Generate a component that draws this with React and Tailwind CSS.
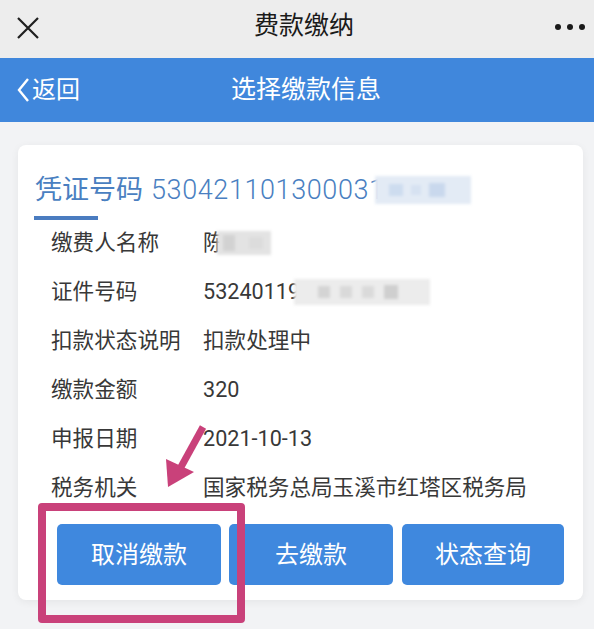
import React from 'react';

const rows = [
  { label: '缴费人名称', value: '陈', blur: 'name' },
  { label: '证件号码', value: '53240119', blur: 'id' },
  { label: '扣款状态说明', value: '扣款处理中' },
  { label: '缴款金额', value: '320' },
  { label: '申报日期', value: '2021-10-13' },
  { label: '税务机关', value: '国家税务总局玉溪市红塔区税务局' },
];

function Blur({ kind }) {
  if (kind === 'name') {
    return (
      <span className="inline-flex items-center -ml-[8px] w-[54px] h-[24px] bg-[#e3e3e3] blur-[1.5px] align-middle">
        <span className="w-[12px] h-[16px] bg-[#d2d2d2] ml-[6px]" />
        <span className="w-[14px] h-[12px] bg-[#dcdcdc] ml-[14px]" />
      </span>
    );
  }
  return (
    <span className="inline-flex items-center -ml-[6px] w-[136px] h-[26px] bg-[#ececec] blur-[1.5px] align-middle gap-[10px] pl-[24px]">
      <span className="w-[12px] h-[12px] bg-[#d4d4d4]" />
      <span className="w-[12px] h-[12px] bg-[#d9d9d9]" />
      <span className="w-[12px] h-[12px] bg-[#dadada]" />
      <span className="w-[14px] h-[14px] bg-[#cfcfcf]" />
    </span>
  );
}

export default function App() {
  return (
    <div className="relative w-[594px] h-[629px] overflow-hidden bg-[#f2f3f5] font-['Roboto','Noto_Sans_CJK_SC',sans-serif]">
      {/* wechat top bar */}
      <div className="h-[58px] bg-[#ededed] flex items-center justify-between px-[17px]">
        <svg width="22" height="22" viewBox="0 0 22 22" className="mt-[-2px]">
          <path d="M1 1 L21 21 M21 1 L1 21" stroke="#1f1f1f" strokeWidth="2.2" fill="none" />
        </svg>
        <div className="text-[25px] text-[#1a1a1a] ml-[14px] mt-[-6px]">费款缴纳</div>
        <div className="flex gap-[6px] mr-[-8px] mt-[-4px]">
          <span className="w-[6px] h-[6px] rounded-full bg-[#1a1a1a]" />
          <span className="w-[6px] h-[6px] rounded-full bg-[#1a1a1a]" />
          <span className="w-[6px] h-[6px] rounded-full bg-[#1a1a1a]" />
        </div>
      </div>

      {/* blue nav */}
      <div className="h-[64px] bg-[#4087dc] flex items-center relative">
        <div className="flex items-center pl-[17px] text-white text-[24px]">
          <svg width="12" height="24" viewBox="0 0 12 24" className="mr-[3px]">
            <path d="M11 1 L2 12 L11 23" stroke="#fff" strokeWidth="2.4" fill="none" />
          </svg>
          返回
        </div>
        <div className="absolute left-[231px] text-white text-[25px]">选择缴款信息</div>
      </div>

      {/* card */}
      <div className="pt-[23px] pl-[18px] pr-[11px]">
        <div className="bg-white rounded-[8px] shadow-[0_2px_8px_rgba(0,0,0,0.06)] h-[455px] pt-[27px]">
          <div className="pl-[17px] h-[36px] flex items-center text-[27px] text-[#4a7fc1] whitespace-nowrap">
            <span>凭证号码</span>
            <span className="ml-[8px] tracking-[0.6px] font-light">530421101300031</span>
            <span className="inline-flex items-center -ml-[10px] w-[96px] h-[28px] bg-[#e3ebf5] blur-[1.5px] gap-[8px] pl-[14px]">
              <span className="w-[14px] h-[12px] bg-[#cddcef]" />
              <span className="w-[10px] h-[10px] bg-[#d6e2f1]" />
              <span className="w-[16px] h-[14px] bg-[#c9d8ed]" />
            </span>
          </div>
          <div className="ml-[16px] mt-[8px] w-[64px] h-[4px] bg-[#4a7cc0]" />

          <div className="mt-[-1px]">
            {rows.map((r) => (
              <div key={r.label} className="h-[49px] flex items-center text-[21.6px] text-[#383838] pl-[33px] whitespace-nowrap">
                <span className="w-[152px]">{r.label}</span>
                <span className="flex items-center">
                  {r.value}
                  {r.blur && <Blur kind={r.blur} />}
                </span>
              </div>
            ))}
          </div>

          <div className="flex pl-[39px] mt-[11px] gap-[8px]">
            <button className="w-[164px] h-[61px] rounded-[5px] bg-[#3f88de] text-white text-[24px]">取消缴款</button>
            <button className="w-[164px] h-[61px] rounded-[5px] bg-[#3f88de] text-white text-[24px]">去缴款</button>
            <button className="w-[162px] h-[61px] rounded-[5px] bg-[#3f88de] text-white text-[24px] ml-[1px]">状态查询</button>
          </div>
        </div>
      </div>

      {/* annotation: pink box */}
      <div className="absolute left-[38px] top-[503px] w-[207px] h-[120px] border-[8px] border-[#c9417a] rounded-[4px]" />

      {/* annotation: arrow */}
      <svg className="absolute left-0 top-0 pointer-events-none" width="594" height="629">
        <path d="M203 427 L181 467" stroke="#c9417a" strokeWidth="7" fill="none" />
        <path d="M168 487 L166 459 L194 472 Z" fill="#c9417a" />
      </svg>
    </div>
  );
}
